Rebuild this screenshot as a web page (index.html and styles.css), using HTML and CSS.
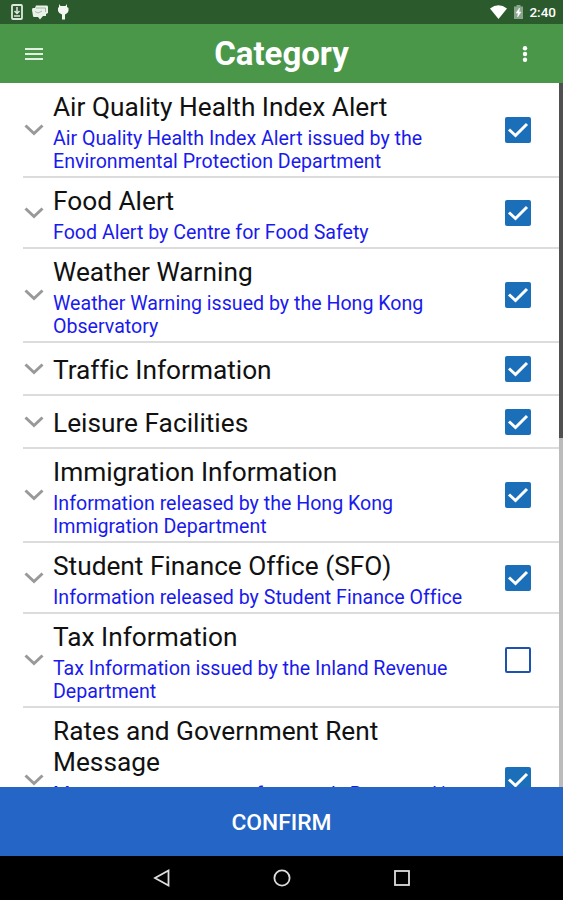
FILE: index.html
```html
<!DOCTYPE html>
<html lang="en">
<head>
	<meta charset="UTF-8">
	<meta name="viewport" content="width=device-width, initial-scale=1.0">
	<title>Category</title>
	<link rel="stylesheet" href="styles.css">
</head>
<body>
	<svg class="sprite" width="0" height="0">
		<symbol id="chevron" viewBox="0 0 20 12">
			<path d="M1.5 1.5 L10 9.5 L18.5 1.5" fill="none" stroke="#999" stroke-width="3"/>
		</symbol>
		<symbol id="tick" viewBox="0 0 26 26">
			<path d="M4 12.5 L10.5 18.5 L22 7" fill="none" stroke="#fff" stroke-width="3"/>
		</symbol>
	</svg>

	<div class="status-bar">
		<div class="status-left">
			<svg width="12" height="16" viewBox="0 0 12 16">
				<rect x="1" y="1" width="10" height="14" rx="1" fill="none" stroke="#dfe9df" stroke-width="1.8"/>
				<path d="M6 3 V9 M3.5 7 L6 9.5 L8.5 7 M3 12 H9" fill="none" stroke="#dfe9df" stroke-width="1.5"/>
			</svg>
			<svg width="16" height="15" viewBox="0 0 16 15">
				<path d="M4 0.5 H15 Q16 0.5 16 2 V8 L14 9 V11 H11 L8 14.5 L6 12 H2 Q1 12 1 11 L0 5 Q0 3 1 3 H3 Z" fill="#e8f0e8"/>
				<path d="M4 3 H13.5 V7 M3 6.5 L6 8 L10 6" fill="none" stroke="#8fab90" stroke-width=".8"/>
			</svg>
			<svg width="12" height="16" viewBox="0 0 12 16">
				<path d="M2 0 L3.5 2 H8.5 L10 0 V3 L11.5 4 V7 Q10.5 10 8 10.5 V15.5 H5 V10.5 Q2 10 1 7 V4 L2 3 Z" fill="#f2f7f2"/>
			</svg>
		</div>
		<div class="status-right">
			<svg width="17" height="14" viewBox="0 0 17 14">
				<path d="M0 3.5 Q8.5 -3 17 3.5 L8.5 14 Z" fill="#fff"/>
			</svg>
			<svg class="battery" width="9" height="14" viewBox="0 0 9 14">
				<path d="M0 1.5 H2.5 V0 H6.5 V1.5 H9 V14 H0 Z" fill="#8aa58b"/>
				<path d="M5.5 3 L2 8 H4.2 L3.5 12 L7 7 H5 Z" fill="#fff" stroke="#fff" stroke-width=".5"/>
			</svg>
			<span class="clock">2:40</span>
		</div>
	</div>

	<header class="app-bar">
		<svg width="18" height="14" viewBox="0 0 18 14">
			<path d="M0 2 H18 M0 7 H18 M0 12 H18" stroke="#e2f0e1" stroke-width="2.2"/>
		</svg>
		<h1>Category</h1>
		<svg width="6" height="18" viewBox="0 0 6 18">
			<circle cx="3" cy="3.3" r="2.2" fill="#fff"/>
			<circle cx="3" cy="9" r="2.2" fill="#fff"/>
			<circle cx="3" cy="14.7" r="2.2" fill="#fff"/>
		</svg>
	</header>

	<main class="content">
		<ul class="category-list">
			<li class="row">
				<svg class="chevron"><use href="#chevron"/></svg>
				<div class="text">
					<h2>Air Quality Health Index Alert</h2>
					<p>Air Quality Health Index Alert issued by the<br>Environmental Protection Department</p>
				</div>
				<span class="checkbox checked"><svg><use href="#tick"/></svg></span>
			</li>
			<li class="row">
				<svg class="chevron"><use href="#chevron"/></svg>
				<div class="text">
					<h2>Food Alert</h2>
					<p>Food Alert by Centre for Food Safety</p>
				</div>
				<span class="checkbox checked"><svg><use href="#tick"/></svg></span>
			</li>
			<li class="row">
				<svg class="chevron"><use href="#chevron"/></svg>
				<div class="text">
					<h2>Weather Warning</h2>
					<p>Weather Warning issued by the Hong Kong<br>Observatory</p>
				</div>
				<span class="checkbox checked"><svg><use href="#tick"/></svg></span>
			</li>
			<li class="row single">
				<svg class="chevron"><use href="#chevron"/></svg>
				<div class="text">
					<h2>Traffic Information</h2>
				</div>
				<span class="checkbox checked"><svg><use href="#tick"/></svg></span>
			</li>
			<li class="row single">
				<svg class="chevron"><use href="#chevron"/></svg>
				<div class="text">
					<h2>Leisure Facilities</h2>
				</div>
				<span class="checkbox checked"><svg><use href="#tick"/></svg></span>
			</li>
			<li class="row">
				<svg class="chevron"><use href="#chevron"/></svg>
				<div class="text">
					<h2>Immigration Information</h2>
					<p>Information released by the Hong Kong<br>Immigration Department</p>
				</div>
				<span class="checkbox checked"><svg><use href="#tick"/></svg></span>
			</li>
			<li class="row">
				<svg class="chevron"><use href="#chevron"/></svg>
				<div class="text">
					<h2>Student Finance Office (SFO)</h2>
					<p>Information released by Student Finance Office</p>
				</div>
				<span class="checkbox checked"><svg><use href="#tick"/></svg></span>
			</li>
			<li class="row">
				<svg class="chevron"><use href="#chevron"/></svg>
				<div class="text">
					<h2>Tax Information</h2>
					<p>Tax Information issued by the Inland Revenue<br>Department</p>
				</div>
				<span class="checkbox"></span>
			</li>
			<li class="row tall">
				<svg class="chevron"><use href="#chevron"/></svg>
				<div class="text">
					<h2>Rates and Government Rent<br>Message</h2>
					<p>Message on payment of quarterly Rates and/or</p>
				</div>
				<span class="checkbox checked"><svg><use href="#tick"/></svg></span>
			</li>
		</ul>
		<div class="scrollbar"><div class="thumb"></div></div>
	</main>

	<button class="confirm">CONFIRM</button>

	<nav class="nav-bar">
		<svg width="18" height="20" viewBox="0 0 18 20">
			<path d="M15.5 2.5 V17.5 L2 10 Z" fill="none" stroke="#ddd" stroke-width="1.8"/>
		</svg>
		<svg width="18" height="20" viewBox="0 0 18 20">
			<circle cx="9" cy="10" r="7.6" fill="none" stroke="#ddd" stroke-width="1.8"/>
		</svg>
		<svg width="18" height="20" viewBox="0 0 18 20">
			<rect x="2" y="3" width="14" height="14" fill="none" stroke="#ddd" stroke-width="1.8"/>
		</svg>
	</nav>
</body>
</html>
```

FILE: styles.css
```css
* {
	box-sizing: border-box;
}
body {
	margin: 0;
	height: 900px;
	display: flex;
	flex-direction: column;
	overflow: hidden;
	font-family: Roboto, sans-serif;
	font-variant-ligatures: none;
	background: #fff;
}
h1, h2, p, ul {
	margin: 0;
	padding: 0;
}
svg {
	display: block;
	flex: none;
}
.sprite {
	position: absolute;
}

.status-bar {
	flex: none;
	height: 24px;
	padding: 0 7px 0 11px;
	background: #2b5a2c;
	display: flex;
	justify-content: space-between;
	align-items: center;
}
.status-left {
	display: flex;
	align-items: center;
	gap: 9px;
}
.status-right {
	display: flex;
	align-items: center;
}
.battery {
	margin: 0 6px 0 7px;
}
.clock {
	font-size: 13.5px;
	font-weight: 500;
	line-height: 24px;
	color: #fff;
}

.app-bar {
	flex: none;
	height: 59px;
	padding: 0 35px 0 25px;
	background: #4a974a;
	display: flex;
	justify-content: space-between;
	align-items: center;
}
.app-bar h1 {
	margin-right: 2px;
	padding-top: 1px;
	font-size: 33px;
	font-weight: 700;
	line-height: 40px;
	color: #fff;
}

.content {
	flex: 1;
	min-height: 0;
	display: flex;
	overflow: hidden;
}
.category-list {
	flex: 1;
	list-style: none;
	padding: 1px 0 0 23px;
}
.row {
	display: flex;
	align-items: center;
	min-height: 53px;
	padding: 8px 28px 3px 1px;
	border-bottom: 2px solid #dcdcdc;
}
.row.single {
	padding-top: 3px;
	padding-bottom: 0;
}
.row.tall {
	height: 145px;
}
.row.tall .text {
	align-self: flex-start;
}
.text {
	flex: 1;
}
.text h2 {
	font-size: 26.25px;
	font-weight: 400;
	line-height: 31px;
	color: #111;
}
.text p {
	margin-top: 4px;
	font-size: 19.6px;
	line-height: 23px;
	color: #1a1aee;
}
.row.tall p {
	margin-top: 5px;
}
.chevron {
	width: 20px;
	height: 12px;
	margin: 0 9px 5px 0;
}
.checkbox {
	flex: none;
	width: 26px;
	height: 26px;
	margin-bottom: 5px;
	border: 2px solid #1d52b0;
	border-radius: 2px;
}
.row.single .chevron,
.row.single .checkbox {
	margin-bottom: 2px;
}
.checkbox.checked {
	border: none;
	background: #1a6fb8;
}
.checkbox svg {
	width: 26px;
	height: 26px;
}

.scrollbar {
	width: 4px;
	background: #bbb;
}
.thumb {
	height: 355px;
	background: #505050;
}

.confirm {
	flex: none;
	height: 69px;
	padding: 2px 0 0;
	border: none;
	background: #2465c6;
	font-family: inherit;
	font-size: 22.8px;
	font-weight: 500;
	color: #fff;
}

.nav-bar {
	flex: none;
	height: 44px;
	background: #000;
	display: flex;
	justify-content: center;
	align-items: center;
	gap: 102px;
}
```
